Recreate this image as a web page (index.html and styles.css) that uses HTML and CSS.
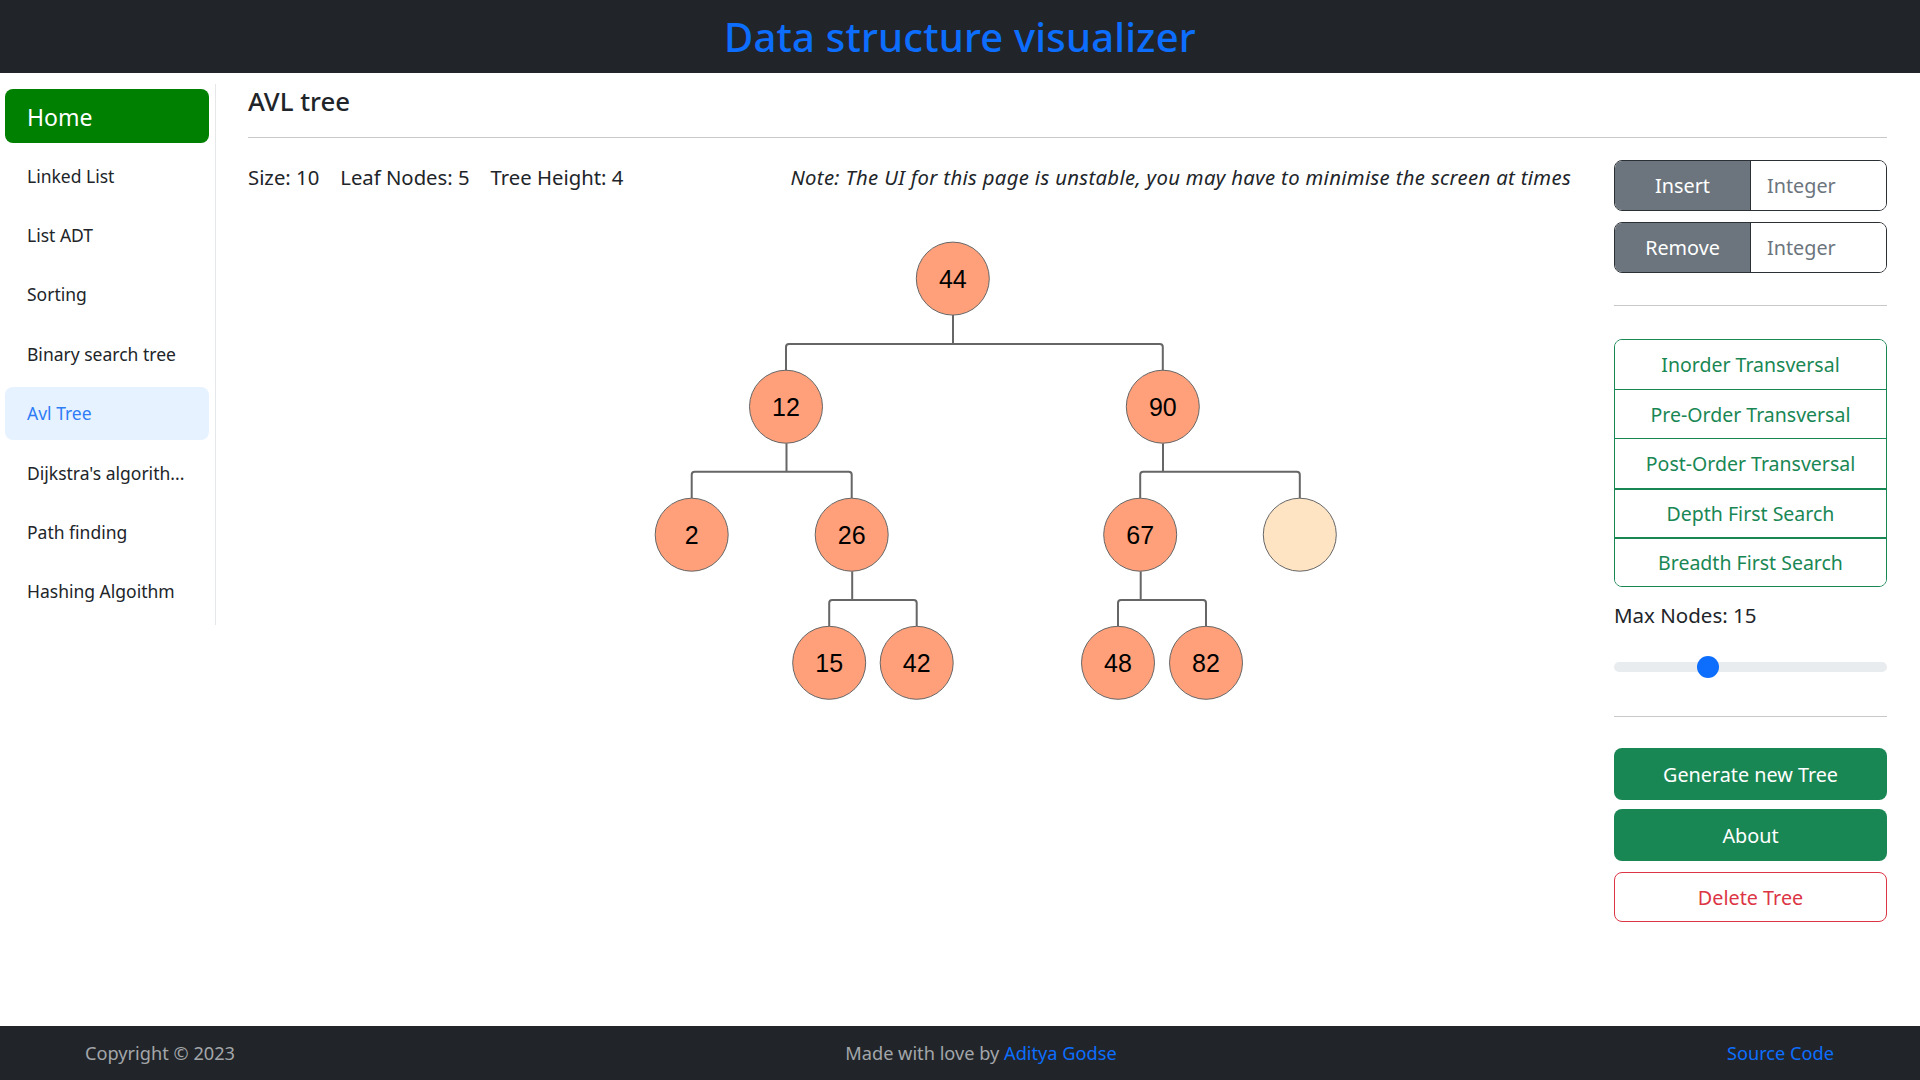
FILE: index.html
```html
<!DOCTYPE html>
<html lang="en">
<head>
<meta charset="utf-8">
<title>Data structure visualizer</title>
<link rel="stylesheet" href="styles.css">
</head>
<body>
<div class="page">
  <header class="topbar">
    <h1 class="title">Data structure visualizer</h1>
  </header>
  <div class="main">
    <nav class="sidebar">
      <a class="home">Home</a>
      <a class="nav-item">Linked List</a>
      <a class="nav-item">List ADT</a>
      <a class="nav-item">Sorting</a>
      <a class="nav-item">Binary search tree</a>
      <a class="nav-item active">Avl Tree</a>
      <a class="nav-item">Dijkstra's algorith...</a>
      <a class="nav-item">Path finding</a>
      <a class="nav-item">Hashing Algoithm</a>
    </nav>
    <section class="content">
      <h2 class="heading">AVL tree</h2>
      <hr class="rule">
      <div class="workspace">
        <div class="canvas-col">
          <div class="stats">
            <span class="stat">Size: 10</span>
            <span class="stat">Leaf Nodes: 5</span>
            <span class="stat">Tree Height: 4</span>
            <span class="note">Note: The UI for this page is unstable, you may have to minimise the screen at times</span>
          </div>
          <svg class="tree" width="1323" height="540" viewBox="248 196 1323 540" xmlns="http://www.w3.org/2000/svg">
            <g class="edges" fill="none" stroke="#666" stroke-width="2">
              <path d="M953 315 V344.1 M786 370.7 V347.1 Q786 344.1 789 344.1 H1159.8 Q1162.8 344.1 1162.8 347.1 V370.7"/>
              <path d="M786.5 443.2 V471.7 M691.7 498.2 V474.7 Q691.7 471.7 694.7 471.7 H848.7 Q851.7 471.7 851.7 474.7 V498.2"/>
              <path d="M1163 443.2 V471.7 M1140.2 498.2 V474.7 Q1140.2 471.7 1143.2 471.7 H1296.8 Q1299.8 471.7 1299.8 474.7 V498.2"/>
              <path d="M852.2 571.2 V600 M829.2 626.3 V603 Q829.2 600 832.2 600 H913.7 Q916.7 600 916.7 603 V626.3"/>
              <path d="M1140.7 571.2 V600 M1118 626.3 V603 Q1118 600 1121 600 H1203 Q1206 600 1206 603 V626.3"/>
            </g>
            <g class="nodes" stroke="#666" stroke-width="1">
              <circle cx="952.8" cy="278.6" r="36.5" fill="#ffa07a"/>
              <circle cx="786" cy="406.7" r="36.5" fill="#ffa07a"/>
              <circle cx="1162.8" cy="406.7" r="36.5" fill="#ffa07a"/>
              <circle cx="691.7" cy="534.7" r="36.5" fill="#ffa07a"/>
              <circle cx="851.7" cy="534.7" r="36.5" fill="#ffa07a"/>
              <circle cx="1140.2" cy="534.7" r="36.5" fill="#ffa07a"/>
              <circle cx="1299.8" cy="534.7" r="36.5" fill="#ffe4c4"/>
              <circle cx="829.2" cy="662.8" r="36.5" fill="#ffa07a"/>
              <circle cx="916.7" cy="662.8" r="36.5" fill="#ffa07a"/>
              <circle cx="1118" cy="662.8" r="36.5" fill="#ffa07a"/>
              <circle cx="1206" cy="662.8" r="36.5" fill="#ffa07a"/>
            </g>
            <g class="labels">
              <text x="952.8" y="287.6">44</text>
              <text x="786" y="415.7">12</text>
              <text x="1162.8" y="415.7">90</text>
              <text x="691.7" y="543.7">2</text>
              <text x="851.7" y="543.7">26</text>
              <text x="1140.2" y="543.7">67</text>
              <text x="829.2" y="671.8">15</text>
              <text x="916.7" y="671.8">42</text>
              <text x="1118" y="671.8">48</text>
              <text x="1206" y="671.8">82</text>
            </g>
          </svg>
        </div>
        <aside class="panel">
          <div class="input-group">
            <button class="ig-btn">Insert</button>
            <input class="ig-input" type="text" placeholder="Integer">
          </div>
          <div class="input-group second">
            <button class="ig-btn">Remove</button>
            <input class="ig-input" type="text" placeholder="Integer">
          </div>
          <hr class="panel-rule first-rule">
          <div class="btn-stack">
            <button class="stack-btn">Inorder Transversal</button>
            <button class="stack-btn">Pre-Order Transversal</button>
            <button class="stack-btn">Post-Order Transversal</button>
            <button class="stack-btn thick">Depth First Search</button>
            <button class="stack-btn thick">Breadth First Search</button>
          </div>
          <div class="max-label">Max Nodes: 15</div>
          <input class="range" type="range" min="0" max="100" value="33">
          <hr class="panel-rule second-rule">
          <button class="solid-btn gen">Generate new Tree</button>
          <button class="solid-btn about">About</button>
          <button class="outline-danger">Delete Tree</button>
        </aside>
      </div>
    </section>
  </div>
  <footer class="footer">
    <span class="muted">Copyright © 2023</span>
    <span class="muted">Made with love by <a class="link">Aditya Godse</a></span>
    <a class="link">Source Code</a>
  </footer>
</div>
</body>
</html>
```

FILE: styles.css
```css
* { box-sizing: border-box; }

html, body {
  margin: 0;
  padding: 0;
}

body {
  font-family: "Noto Sans", "Open Sans", sans-serif;
  color: #212529;
  background: #fff;
}

.page {
  min-height: 100vh;
  display: flex;
  flex-direction: column;
}

.topbar {
  height: 73px;
  background: #212529;
  display: flex;
  align-items: center;
  justify-content: center;
}

.title {
  margin: 0;
  color: #0d6efd;
  font-size: 40px;
  font-weight: 500;
  line-height: 73px;
  letter-spacing: 0.2px;
}

.main {
  flex: 1;
  display: flex;
  align-items: flex-start;
  padding-top: 11px;
}

.sidebar {
  width: 216px;
  flex: none;
  display: flex;
  flex-direction: column;
  gap: 6px;
  padding: 5px 6px 7px 5px;
  border-right: 1px solid #e6e7e8;
}

.home {
  height: 54px;
  display: flex;
  align-items: center;
  padding-left: 22px;
  padding-top: 1px;
  background: #008000;
  color: #fff;
  font-size: 23px;
  border-radius: 8px;
}

.nav-item {
  height: 53.4px;
  display: flex;
  align-items: center;
  padding-left: 22px;
  font-size: 17.5px;
  color: #212529;
  border-radius: 8px;
  white-space: nowrap;
}

.nav-item.active {
  background: #e6f2ff;
  color: #2f7df6;
}

.content {
  flex: 1;
  margin-left: 32px;
  padding-right: 33px;
  min-width: 0;
}

.heading {
  margin: 0;
  font-size: 25.8px;
  font-weight: 500;
  line-height: 35px;
  color: #212529;
}

.rule {
  margin: 18px 0 0 0;
  border: 0;
  border-top: 1px solid #c8c9ca;
  height: 0;
}

.workspace {
  display: flex;
  gap: 43px;
  padding-top: 22px;
}

.canvas-col {
  flex: 1;
  min-width: 0;
}

.stats {
  height: 36px;
  padding-bottom: 2px;
  display: flex;
  align-items: center;
  font-size: 20.3px;
  color: #212529;
  white-space: nowrap;
}

.stat {
  margin-right: 21px;
}

.note {
  margin-left: auto;
  font-style: italic;
  font-size: 20.3px;
  letter-spacing: 0.34px;
}

.tree {
  display: block;
}

.labels text {
  font-family: "Liberation Sans", Arial, sans-serif;
  font-size: 25px;
  text-anchor: middle;
  fill: #000;
}

.panel {
  width: 273px;
  flex: none;
  display: flex;
  flex-direction: column;
}

.input-group {
  display: flex;
  height: 51px;
  border: 1px solid #2b3035;
  border-radius: 8px;
  overflow: hidden;
}

.input-group.second {
  margin-top: 11px;
}

.ig-btn {
  width: 136px;
  flex: none;
  border: 0;
  border-right: 1px solid #2b3035;
  background: #6c757d;
  color: #fff;
  font-family: inherit;
  font-size: 19.8px;
  padding: 0;
}

.ig-input {
  flex: 1;
  min-width: 0;
  border: 0;
  padding: 0 0 0 16px;
  font-family: inherit;
  font-size: 19.8px;
  color: #212529;
  background: #fff;
  outline: none;
}

.ig-input::placeholder {
  color: #6c757d;
}

.panel-rule {
  border: 0;
  border-top: 1px solid #c8c9ca;
  height: 0;
  width: 100%;
}

.first-rule {
  margin: 32px 0 33px 0;
}

.btn-stack {
  display: flex;
  flex-direction: column;
  border: 1px solid #198754;
  border-radius: 8px;
  overflow: hidden;
}

.stack-btn {
  height: 49.2px;
  border: 0;
  border-top: 1px solid #198754;
  background: #fff;
  color: #198754;
  font-family: inherit;
  font-size: 19.5px;
  padding: 0;
}

.stack-btn:first-child {
  border-top: 0;
}

.stack-btn.thick {
  border-top-width: 2px;
}

.max-label {
  margin-top: 14px;
  line-height: 28px;
  font-size: 20.5px;
  color: #212529;
}

.range {
  -webkit-appearance: none;
  appearance: none;
  width: 100%;
  height: 22px;
  margin: 27px 0 0 0;
  padding: 0;
  background: transparent;
}

.range::-webkit-slider-runnable-track {
  height: 10px;
  background: #e9ecef;
  border-radius: 5px;
  border: 0;
}

.range::-webkit-slider-thumb {
  -webkit-appearance: none;
  appearance: none;
  width: 22px;
  height: 22px;
  border-radius: 50%;
  background: #0d6efd;
  border: 0;
  margin-top: -6px;
}

.second-rule {
  margin: 38px 0 31px 0;
}

.solid-btn {
  height: 52px;
  border: 0;
  border-radius: 8px;
  background: #198754;
  color: #fff;
  font-family: inherit;
  font-size: 19.8px;
  padding: 0 0 0 0;
}

.solid-btn.gen {
  padding-top: 2px;
}

.solid-btn.about {
  margin-top: 9px;
  padding-top: 2px;
}

.outline-danger {
  margin-top: 11px;
  height: 50px;
  border: 1px solid #dc3545;
  border-radius: 8px;
  background: #fff;
  color: #dc3545;
  font-family: inherit;
  font-size: 19.8px;
  padding: 2px 0 0 0;
}

.footer {
  height: 54px;
  flex: none;
  background: #212529;
  display: flex;
  align-items: center;
  justify-content: space-between;
  padding: 0 86px 0 85px;
  font-size: 18.2px;
}

.muted {
  color: #a3a6a9;
}

.link {
  color: #0d6efd;
  text-decoration: none;
}
```
